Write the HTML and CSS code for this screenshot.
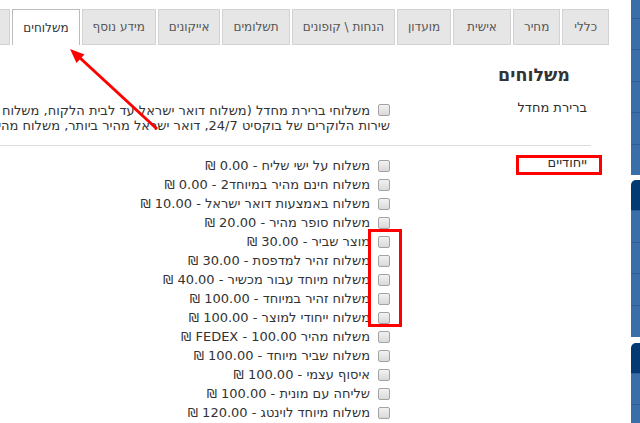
FILE: index.html
```html
<!DOCTYPE html>
<html lang="he" dir="rtl">
<head>
<meta charset="utf-8">
<title>משלוחים</title>
<link rel="stylesheet" href="styles.css">
</head>
<body>
<div class="page">
  <aside class="sidebar">
    <div class="side-group">
      <div class="side-seg first"></div>
      <div class="side-seg"></div>
      <div class="side-seg"></div>
      <div class="side-seg"></div>
      <div class="side-seg"></div>
      <div class="side-seg"></div>
    </div>
    <div class="side-group g2">
      <div class="side-head"></div>
      <div class="side-seg tall"></div>
      <div class="side-seg tall"></div>
      <div class="side-seg tall"></div>
      <div class="side-seg tall"></div>
    </div>
    <div class="side-group g3">
      <div class="side-head"></div>
      <div class="side-seg"></div>
      <div class="side-seg"></div>
    </div>
  </aside>

  <main class="main">
    <nav class="tabs">
      <div class="tab tab-first">כללי</div>
      <div class="tab">מחיר</div>
      <div class="tab tab-wide">אישית</div>
      <div class="tab">מועדון</div>
      <div class="tab">הנחות \ קופונים</div>
      <div class="tab">תשלומים</div>
      <div class="tab">אייקונים</div>
      <div class="tab">מידע נוסף</div>
      <div class="tab active">משלוחים</div>
      <div class="tab tab-cut">קידום</div>
    </nav>

    <h1 class="title">משלוחים</h1>

    <div class="form">
      <div class="row row-default">
        <div class="row-label">ברירת מחדל</div>
        <div class="row-value">
          <label class="default-text"><input type="checkbox" class="cb">משלוחי ברירת מחדל (משלוח דואר ישראל עד לבית הלקוח, משלוח מעיר לעיר)<br>שירות הלוקרים של בוקסיט 24/7, דואר ישראל מהיר ביותר, משלוח מהיר גוש דן)</label>
        </div>
      </div>

      <div class="row row-special">
        <div class="row-label">ייחודיים</div>
        <div class="row-value">
          <label class="item"><input type="checkbox" class="cb"><span>משלוח על ישי שליח - 0.00 ₪</span></label>
          <label class="item"><input type="checkbox" class="cb"><span>משלוח חינם מהיר במיוחד2 - 0.00 ₪</span></label>
          <label class="item"><input type="checkbox" class="cb"><span>משלוח באמצעות דואר ישראל - 10.00 ₪</span></label>
          <label class="item"><input type="checkbox" class="cb"><span>משלוח סופר מהיר - 20.00 ₪</span></label>
          <label class="item"><input type="checkbox" class="cb"><span>מוצר שביר - 30.00 ₪</span></label>
          <label class="item"><input type="checkbox" class="cb"><span>משלוח זהיר למדפסת - 30.00 ₪</span></label>
          <label class="item"><input type="checkbox" class="cb"><span>משלוח מיוחד עבור מכשיר - 40.00 ₪</span></label>
          <label class="item"><input type="checkbox" class="cb"><span>משלוח זהיר במיוחד - 100.00 ₪</span></label>
          <label class="item"><input type="checkbox" class="cb"><span>משלוח ייחודי למוצר - 100.00 ₪</span></label>
          <label class="item"><input type="checkbox" class="cb"><span>משלוח מהיר FEDEX - 100.00 ₪</span></label>
          <label class="item"><input type="checkbox" class="cb"><span>משלוח שביר מיוחד - 100.00 ₪</span></label>
          <label class="item"><input type="checkbox" class="cb"><span>איסוף עצמי - 100.00 ₪</span></label>
          <label class="item"><input type="checkbox" class="cb"><span>שליחה עם מונית - 100.00 ₪</span></label>
          <label class="item"><input type="checkbox" class="cb"><span>משלוח מיוחד לוינטג - 120.00 ₪</span></label>
        </div>
      </div>
    </div>
  </main>
</div>

<svg class="annot" width="640" height="423" viewBox="0 0 640 423" xmlns="http://www.w3.org/2000/svg">
  <rect x="517.5" y="156.5" width="83" height="17" fill="none" stroke="#ff0000" stroke-width="3"/>
  <rect x="369.5" y="230.5" width="31" height="95" fill="none" stroke="#ff0000" stroke-width="3"/>
  <line x1="79" y1="57" x2="157" y2="129" stroke="#ff0000" stroke-width="3"/>
  <polygon points="70,49 76.5,63 84.5,54.5" fill="#ff0000"/>
</svg>
</body>
</html>
```
FILE: styles.css
```css
html, body {
  margin: 0;
  padding: 0;
}

body {
  position: relative;
  width: 640px;
  height: 423px;
  overflow: hidden;
  background: #ffffff;
  font-family: "DejaVu Sans", "Noto Sans", sans-serif;
  font-size: 13px;
  color: #333333;
}

.page {
  display: flex;
  height: 423px;
}

/* right sidebar (cut off) */
.sidebar {
  width: 9px;
  flex-shrink: 0;
  display: flex;
  flex-direction: column;
}

.side-group {
  display: flex;
  flex-direction: column;
}

.side-group.g2 {
  margin-top: 5px;
}

.side-group.g3 {
  margin-top: 6px;
}

.side-seg {
  box-sizing: border-box;
  height: 31.4px;
  background: #3a6ea8;
  border-top: 1px solid #2c5d94;
}

.side-seg.first {
  height: 18px;
  border-top: none;
}

.side-seg.tall {
  height: 31.75px;
}

.side-head {
  height: 30px;
  background: #033a72;
  border-top-left-radius: 5px;
}

/* main area */
.main {
  flex: 1;
  min-width: 0;
  overflow: hidden;
}

.tabs {
  display: flex;
  gap: 2px;
  height: 45px;
  box-sizing: border-box;
  padding: 9px 22px 0 0;
}

.tab {
  flex-shrink: 0;
  box-sizing: border-box;
  height: 36px;
  display: flex;
  align-items: center;
  padding: 0 10px;
  background: #e6e6e6;
  border: 1px solid #d2d2d2;
  color: #555555;
  font-size: 12px;
  white-space: nowrap;
}

.tab-first {
  padding: 0 11px;
}

.tab-wide {
  padding: 0 13px;
}

.tab-cut {
  padding-right: 16px;
}

.tab.active {
  background: #ffffff;
  border-color: #bcbcbc;
  border-bottom: none;
  color: #333333;
}

.title {
  margin: 18px 61px 0 0;
  font-size: 17.5px;
  line-height: 24px;
  font-weight: bold;
  color: #333333;
}

.form {
  margin-right: 40px;
}

.row {
  display: flex;
}

.row-label {
  width: 201px;
  flex-shrink: 0;
  box-sizing: border-box;
  padding-right: 4px;
  line-height: 15px;
  color: #2e2e2e;
}

.row-value {
  flex: 1;
  min-width: 0;
}

.row-default .row-label {
  padding-top: 13px;
}

.row-default .row-value {
  padding: 16px 0 12px 0;
}

.default-text {
  display: block;
  white-space: nowrap;
  line-height: 15px;
}

.default-text .cb {
  vertical-align: -1px;
  margin: 0 0 0 8px;
}

.row-special {
  border-top: 1px solid #dddddd;
}

.row-special .row-label {
  padding-top: 9px;
}

.row-special .row-value {
  padding-top: 10px;
}

.item {
  display: flex;
  align-items: center;
  gap: 8px;
  height: 19px;
  white-space: nowrap;
  color: #333333;
}

.cb {
  appearance: none;
  -webkit-appearance: none;
  flex-shrink: 0;
  box-sizing: border-box;
  width: 12px;
  height: 12px;
  margin: 0;
  border: 1px solid #a3a3a3;
  border-radius: 2px;
  background: linear-gradient(#f2f2f2, #d9d9d9);
}

/* annotations drawn over the screenshot */
.annot {
  position: absolute;
  top: 0;
  left: 0;
  pointer-events: none;
}
```
